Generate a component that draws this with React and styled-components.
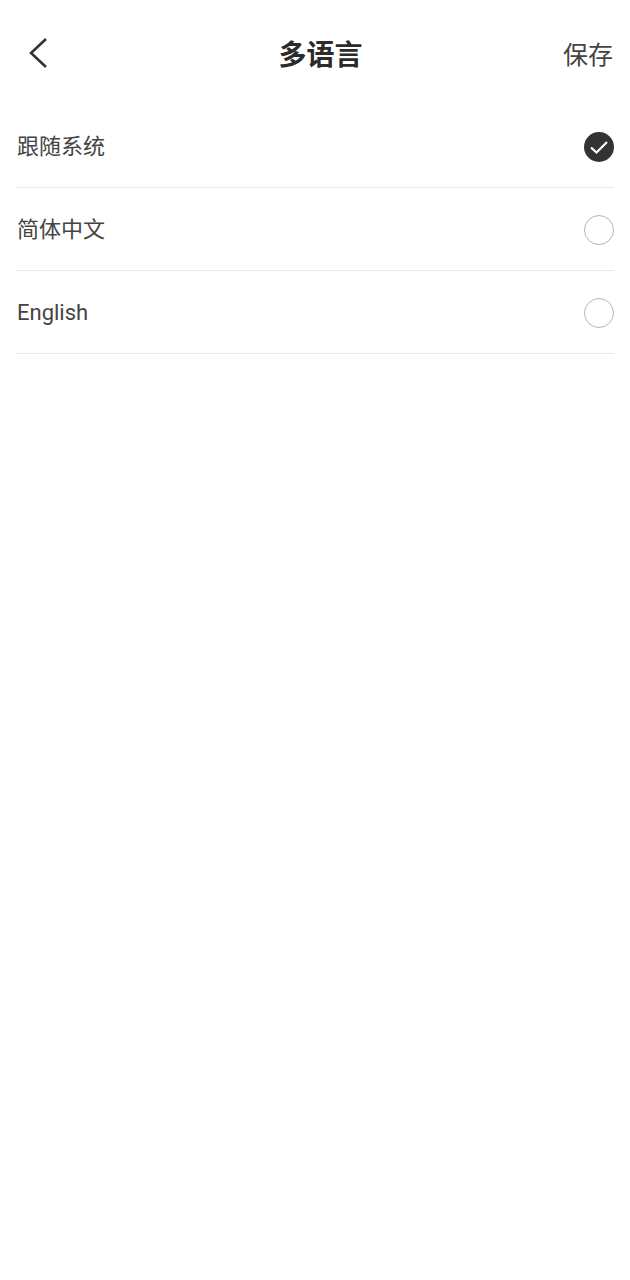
import React, {useState} from 'react';
import styled, {createGlobalStyle} from "styled-components";

const GlobalStyle = createGlobalStyle`
    html, body {
        margin: 0;
        padding: 0;
        background-color: #fff;
    }
    body {
        font-family: "Roboto", "Noto Sans CJK SC", sans-serif;
    }
`
const Page = styled.div`
    width: 630px;
    height: 1280px;
    background-color: #fff;
    overflow: hidden;
`
const Header = styled.header`
    display: grid;
    grid-template-columns: 1fr auto 1fr;
    align-items: center;
    height: 106px;
    padding: 0 17px 0 28px;
    box-sizing: border-box;
`
const BackButton = styled.button`
    justify-self: start;
    width: 20px;
    height: 32px;
    padding: 0;
    border: none;
    background: none;
    color: #333;
    display: flex;
`
const Title = styled.h1`
    margin: 0;
    font-size: 28px;
    line-height: 40px;
    font-weight: 700;
    color: #2b2b2b;
    font-family: "Noto Sans CJK SC", sans-serif;
`
const SaveButton = styled.button`
    justify-self: end;
    padding: 0;
    border: none;
    background: none;
    font-family: "Noto Sans CJK SC", sans-serif;
    font-size: 25px;
    line-height: 40px;
    color: #444;
`
const List = styled.ul`
    list-style: none;
    margin: 0 16px 0 17px;
    padding: 0;
`
const Row = styled.li`
    display: flex;
    align-items: center;
    justify-content: space-between;
    height: 81px;
    border-bottom: 1px solid #e8e8e8;
    margin-bottom: 1px;
    cursor: pointer;
`
const Label = styled.span`
    font-size: 22px;
    line-height: 30px;
    color: #444;
`
const Radio = styled.span`
    width: 30px;
    height: 30px;
    box-sizing: border-box;
    border-radius: 50%;
    border: ${p => p.$checked ? 'none' : '1.5px solid #b4b4b4'};
    background-color: ${p => p.$checked ? '#333' : '#fff'};
    display: flex;
    align-items: center;
    justify-content: center;
`

const languages = ['跟随系统', '简体中文', 'English']

export default function App() {
    const [selected, setSelected] = useState(0)

    return (
        <Page>
            <GlobalStyle/>
            <Header>
                <BackButton aria-label="back">
                    <svg width="20" height="32" viewBox="0 0 20 32" fill="none" stroke="currentColor" strokeWidth="2.6">
                        <path d="M18 2 L3 16 L18 30"/>
                    </svg>
                </BackButton>
                <Title>多语言</Title>
                <SaveButton>保存</SaveButton>
            </Header>
            <List>
                {languages.map((name, i) => (
                    <Row key={name} onClick={() => setSelected(i)}>
                        <Label>{name}</Label>
                        <Radio $checked={selected === i}>
                            {selected === i && (
                                <svg width="20" height="16" viewBox="0 0 20 16" fill="none" stroke="#fff" strokeWidth="2.2">
                                    <path d="M2 8.5 L7.5 13.5 L18 3"/>
                                </svg>
                            )}
                        </Radio>
                    </Row>
                ))}
            </List>
        </Page>
    );
}
